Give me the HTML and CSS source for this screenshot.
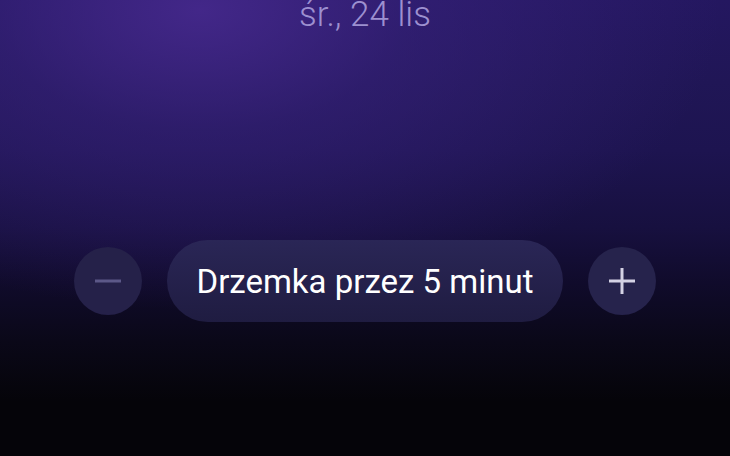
FILE: index.html
```html
<!DOCTYPE html>
<html lang="pl">
<head>
<meta charset="utf-8">
<link rel="stylesheet" href="styles.css">
</head>
<body>
<div class="screen">
  <div class="date">śr., 24 lis</div>
  <div class="controls">
    <button class="round minus" aria-label="mniej">
      <svg width="26" height="26" viewBox="0 0 26 26"><rect x="0" y="11.5" width="26" height="3" fill="#5c5888"/></svg>
    </button>
    <div class="pill">Drzemka przez 5 minut</div>
    <button class="round plus" aria-label="więcej">
      <svg width="26" height="26" viewBox="0 0 26 26"><rect x="0" y="11.5" width="26" height="3" fill="#d4d2e4"/><rect x="11.5" y="0" width="3" height="26" fill="#d4d2e4"/></svg>
    </button>
  </div>
</div>
</body>
</html>
```
FILE: styles.css
```css
html, body {
  margin: 0;
  padding: 0;
  width: 730px;
  height: 456px;
  overflow: hidden;
}
body {
  background: #050409;
  font-family: Roboto, "Noto Sans", sans-serif;
}
.screen {
  width: 730px;
  height: 456px;
  display: flex;
  flex-direction: column;
  align-items: center;
  background:
    radial-gradient(ellipse 520px 300px at 200px 10px, rgba(72,42,144,0.85) 0%, rgba(60,36,130,0.5) 40%, rgba(40,26,100,0) 100%),
    linear-gradient(180deg, #241760 0%, #201656 18%, #1d1450 33%, #17103f 50%, #100b2b 62%, #0a0818 75%, #050409 88%);
}
.date {
  margin-top: -5px;
  font-size: 35px;
  font-weight: 300;
  color: #9d90d0;
  line-height: 40px;
  white-space: nowrap;
}
.controls {
  margin-top: 205px;
  display: flex;
  align-items: center;
  gap: 25px;
}
.round {
  width: 68px;
  height: 68px;
  border-radius: 50%;
  border: none;
  padding: 0;
  display: flex;
  align-items: center;
  justify-content: center;
  background: #26234c;
}
.round svg { display: block; }
.minus { background: #252149; }
.pill {
  width: 396px;
  height: 82px;
  border-radius: 41px;
  background: linear-gradient(180deg, #2a2656 0%, #1f1c41 100%);
  color: #ffffff;
  font-size: 33px;
  display: flex;
  align-items: center;
  justify-content: center;
  white-space: nowrap;
}
```
